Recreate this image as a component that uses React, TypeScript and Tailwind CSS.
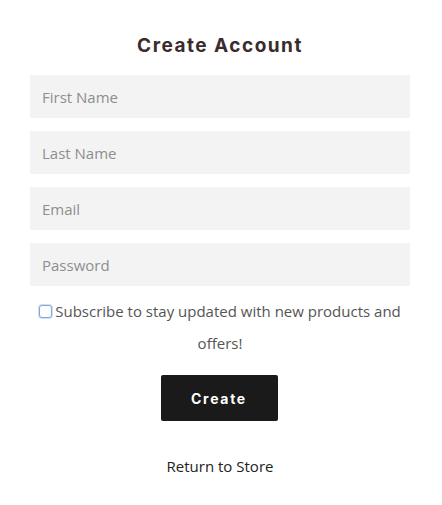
import React from "react";

export default function App() {
  const fields = ["First Name", "Last Name", "Email", "Password"];
  return (
    <div className="w-[440px] h-[505px] bg-white flex flex-col items-center" style={{ fontFamily: '"Open Sans", sans-serif' }}>
      <h1 className="mt-[33px] h-[26px] leading-[26px] text-[19px] font-bold tracking-[1.5px] text-[#3b2b2d]" style={{ fontFamily: 'Inter, sans-serif' }}>
        Create Account
      </h1>
      <div className="mt-[16px] w-[380px] flex flex-col gap-[13px]">
        {fields.map((f) => (
          <input
            key={f}
            placeholder={f}
            type={f === "Password" ? "password" : "text"}
            className="h-[43px] w-full bg-[#f3f3f3] px-[12px] text-[15px] text-[#333] placeholder:text-[#8e8e8e] outline-none"
          />
        ))}
      </div>
      <div className="mt-[9px] w-[380px] text-center text-[15px] leading-[32px] text-[#555]">
        <span className="inline-block align-middle w-[13px] h-[13px] rounded-[3px] border-[1.5px] border-[#7fa7dc] bg-white shadow-[0_0_0_1px_rgba(127,167,220,0.35)] mr-[3px] relative top-[-1px]" />
        Subscribe to stay updated with new products and offers!
      </div>
      <button
        className="mt-[16px] w-[117px] h-[46px] -translate-x-[1px] bg-[#1a1a1a] text-white text-[14px] font-bold tracking-[1.7px] rounded-[2px]"
        style={{ fontFamily: 'Inter, sans-serif' }}
      >
        Create
      </button>
      <a className="mt-[34px] text-[15px] text-[#222]">Return to Store</a>
    </div>
  );
}
